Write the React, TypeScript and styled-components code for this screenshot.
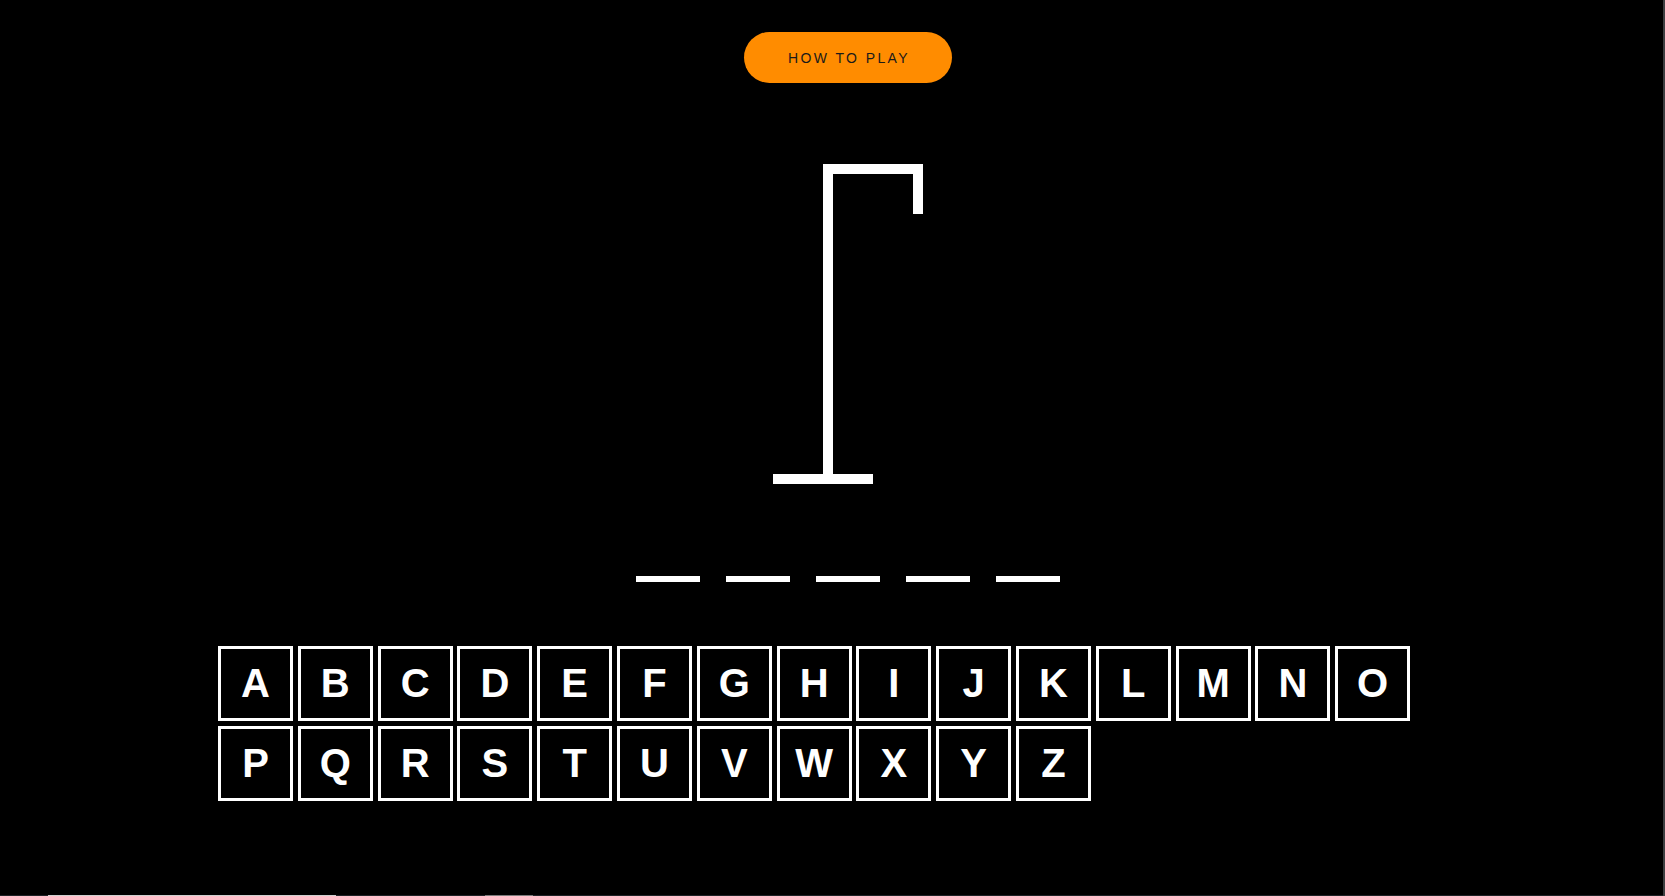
import React from "react";
import styled, { createGlobalStyle } from "styled-components";

const GlobalStyle = createGlobalStyle`
  html, body {
    margin: 0;
    padding: 0;
    background: #000;
    overflow: hidden;
  }
  body {
    font-family: "Liberation Sans", Arial, sans-serif;
  }
`;

const Frame = styled.div`
  display: grid;
  grid-template-columns: 1fr 2px;
  grid-template-rows: 1fr 1px;
  width: 100vw;
  height: 100vh;
  background: #000;
`;

const Main = styled.main`
  display: flex;
  flex-direction: column;
  align-items: center;
  padding: 32px 0 0 33px;
  box-sizing: border-box;
  overflow: hidden;
`;

const SideStrip = styled.div`
  grid-row: 1 / span 2;
  grid-column: 2;
  background: #3c3f41;
`;

const BottomStrip = styled.div`
  grid-row: 2;
  grid-column: 1;
  display: flex;
  background: #1e2226;
`;

const StripSegment = styled.div<{ $w: number; $c: string }>`
  width: ${(p) => p.$w}px;
  flex: none;
  background: ${(p) => p.$c};
`;

const HowToButton = styled.button`
  width: 208px;
  height: 51px;
  border: none;
  border-radius: 26px;
  background: #ff8c00;
  color: #1a1a1a;
  font-family: "Liberation Sans", Arial, sans-serif;
  font-size: 14px;
  letter-spacing: 2.4px;
  text-transform: uppercase;
  padding: 0 0 0 2px;
  cursor: pointer;
`;

const Gallows = styled.svg`
  display: block;
  margin-top: 81px;
  width: 150px;
  height: 320px;
`;

const WordRow = styled.div`
  display: flex;
  gap: 26px;
  margin-top: 92px;
`;

const Dash = styled.div`
  width: 64px;
  height: 6px;
  background: #fff;
`;

const Keyboard = styled.div`
  display: flex;
  flex-wrap: wrap;
  justify-content: flex-start;
  gap: 5px 4.8px;
  width: 1260px;
  margin-top: 64px;
`;

const Key = styled.button`
  width: 75px;
  height: 75px;
  box-sizing: border-box;
  border: 3px solid #fff;
  background: #000;
  color: #fff;
  font-family: "Liberation Sans", Arial, sans-serif;
  font-weight: bold;
  font-size: 40px;
  padding: 0;
  display: flex;
  align-items: center;
  justify-content: center;
  cursor: pointer;
`;

const letters = "ABCDEFGHIJKLMNOPQRSTUVWXYZ".split("");

export default function App() {
  return (
    <>
      <GlobalStyle />
      <Frame>
        <Main>
          <HowToButton>How to play</HowToButton>
          <Gallows viewBox="0 0 150 320">
            <rect x="0" y="310" width="100" height="10" fill="#fff" />
            <rect x="50" y="0" width="10" height="315" fill="#fff" />
            <rect x="50" y="0" width="100" height="10" fill="#fff" />
            <rect x="140" y="0" width="10" height="50" fill="#fff" />
          </Gallows>
          <WordRow>
            {[0, 1, 2, 3, 4].map((i) => (
              <Dash key={i} />
            ))}
          </WordRow>
          <Keyboard>
            {letters.map((l) => (
              <Key key={l}>{l}</Key>
            ))}
          </Keyboard>
        </Main>
        <SideStrip />
        <BottomStrip>
          <StripSegment $w={48} $c="#1e2226" />
          <StripSegment $w={288} $c="#cfcfcf" />
          <StripSegment $w={149} $c="#1e2226" />
          <StripSegment $w={48} $c="#7a7a7a" />
        </BottomStrip>
      </Frame>
    </>
  );
}
